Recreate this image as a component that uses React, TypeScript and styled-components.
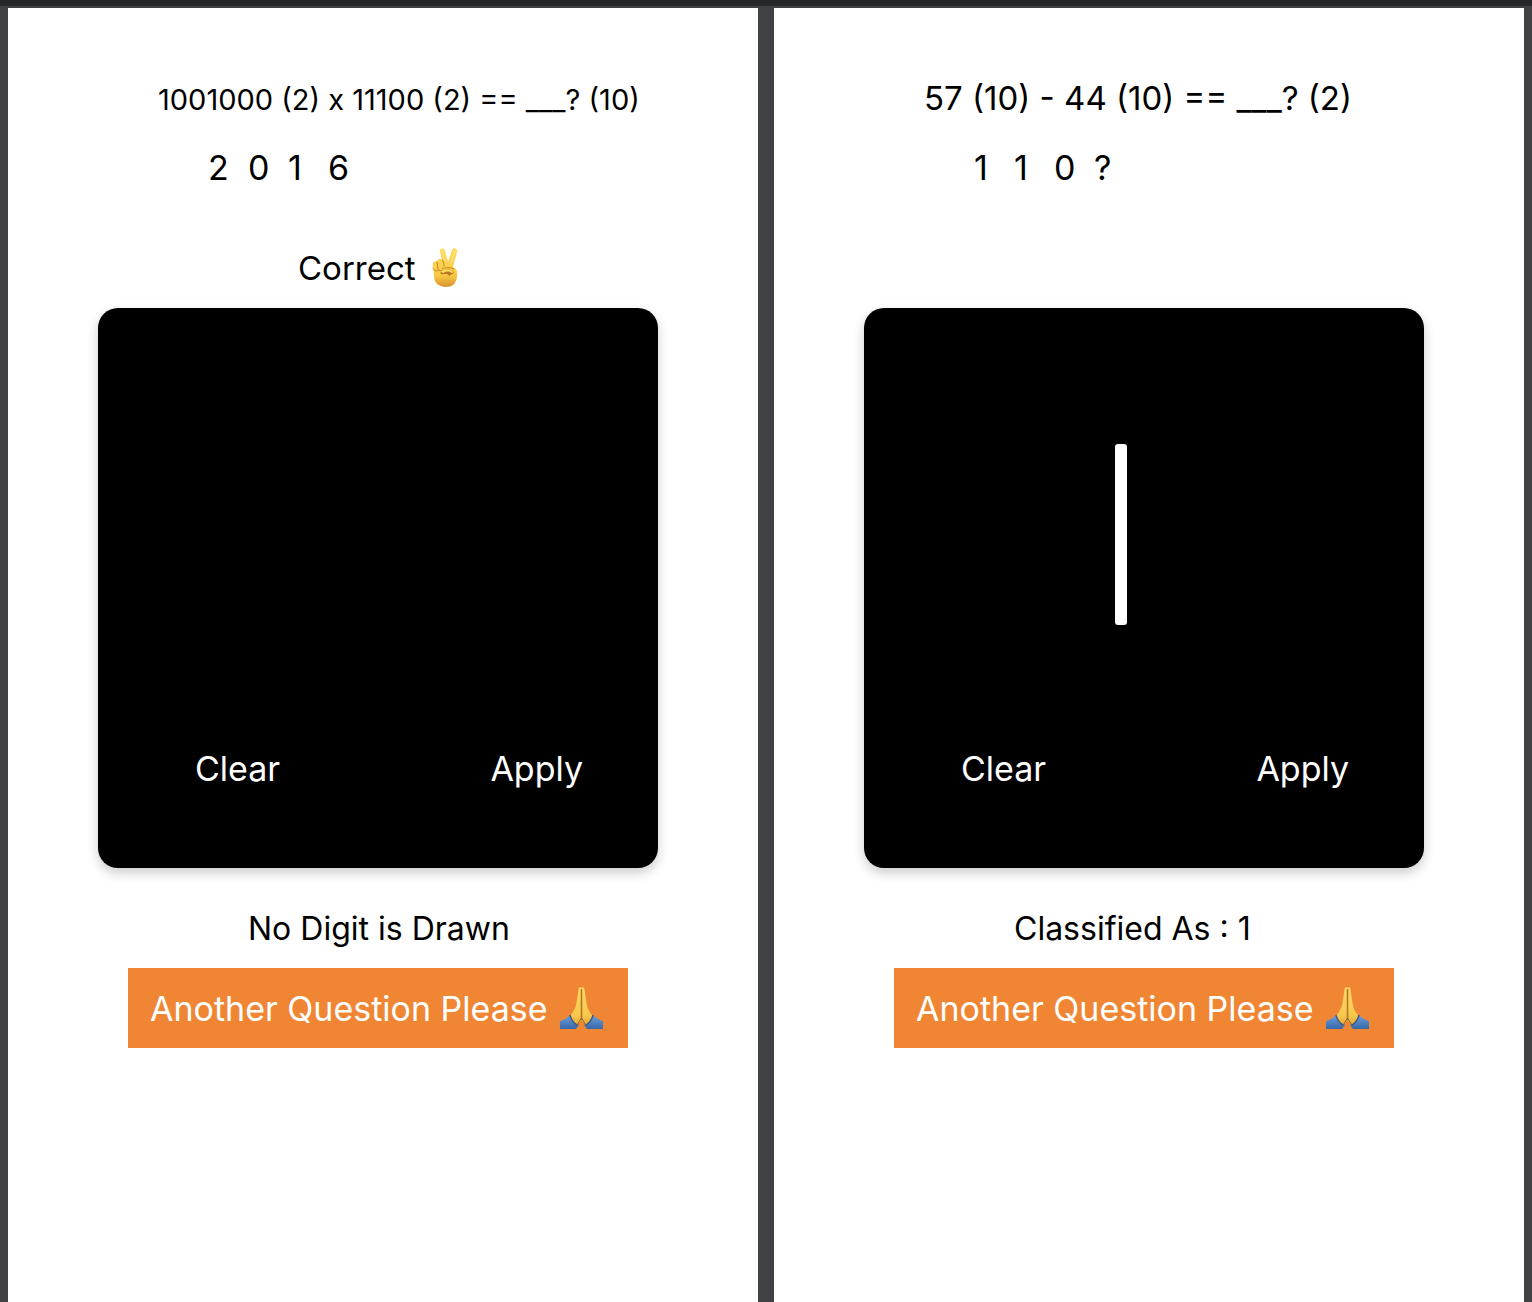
import React from "react";
import styled, { createGlobalStyle } from "styled-components";

const GlobalStyle = createGlobalStyle`
  *, *::before, *::after { box-sizing: border-box; }
  body {
    margin: 0;
    background: #404145;
    color: #000;
    font-family: Inter, "Liberation Sans", sans-serif;
    font-size: 34px;
  }
`;

const Page = styled.main`
  display: grid;
  grid-template-columns: repeat(2, minmax(0, 1fr));
  gap: 16px;
  min-height: 100vh;
  padding: 2px 8px 0;
  border-top: 6px solid #252629;
`;

const Screen = styled.section`
  display: flex;
  flex-direction: column;
  padding: 60px 100px 60px 90px;
  background: #fff;
`;

const Question = styled.h1`
  margin: 0 -60px 0 60px;
  font-size: 33px;
  font-weight: 400;
  line-height: 60px;
  white-space: nowrap;
`;

const Expression = styled.span<{ $small?: boolean }>`
  font-size: ${(p) => (p.$small ? 29 : 33)}px;
  line-height: 1;
`;

const Answer = styled.div`
  display: grid;
  grid-template-columns: repeat(auto-fill, 40px);
  align-items: center;
  height: 80px;
  padding-left: 110px;
  line-height: 40px;
`;

const Message = styled.p<{ $indent: number }>`
  display: flex;
  align-items: center;
  gap: 16px;
  height: 80px;
  margin: 20px 0 0;
  padding-left: ${(p) => p.$indent}px;
  white-space: nowrap;
`;

const Verdict = styled(Message)`
  font-size: 33px;
`;

const Result = styled(Message)`
  font-size: 32px;
`;

const Board = styled.div`
  position: relative;
  display: flex;
  align-items: flex-end;
  justify-content: space-between;
  width: 100%;
  max-width: 560px;
  aspect-ratio: 1;
  padding: 0 75px 70px 97px;
  border-radius: 20px;
  background: #000;
  box-shadow: 0 5px 12px rgba(0, 0, 0, 0.2);
`;

const Drawing = styled.svg`
  position: absolute;
  inset: 0;
  width: 100%;
  height: 100%;
`;

const BoardButton = styled.button`
  position: relative;
  height: 60px;
  padding: 0;
  border: 0;
  background: transparent;
  color: #fff;
  font: inherit;
  cursor: pointer;
`;

const NextButton = styled.button`
  display: flex;
  align-items: center;
  gap: 12px;
  height: 80px;
  max-width: 500px;
  margin: 0 30px;
  padding: 0 22px;
  border: 0;
  background: #f08633;
  color: #fff;
  font: inherit;
  white-space: nowrap;
  cursor: pointer;
`;

const Icon = styled.svg`
  flex: none;
`;

function VictoryHand() {
  return (
    <Icon width="28" height="40" viewBox="0 0 28 40" role="img" aria-label="Victory hand">
      <defs>
        <linearGradient id="victory" x1="0" y1="0" x2="0" y2="1">
          <stop offset="0" stopColor="#ffdb5c" />
          <stop offset="0.7" stopColor="#f9c945" />
          <stop offset="1" stopColor="#d8932d" />
        </linearGradient>
      </defs>
      <path
        d="M8 4C7 0 12-1 13 3l3 11 4-12c1-3 6-2 5 2l-4 15c4 2 5 5 4 10-1 7-5 10-11 10-7 0-12-4-12-11l-1-10c-1-3 1-5 4-5 1-3 4-2 5-1Z"
        fill="url(#victory)"
      />
      <path
        d="M10 12c2 1 2 4 2 6M5 14l1 7c1 3 5 2 5-1M1 20c1 3 4 4 6 2m5-2c3 0 7-1 10 1"
        fill="none"
        stroke="#c58422"
        strokeWidth="1"
        strokeLinecap="round"
      />
      <path d="M8 25c2 3 7-1 9 3 2-2 4-1 5-4-3-3-8-3-10-1Z" fill="#bc7a20" />
      <path d="M11 24c3-2 7-2 9 0" fill="none" stroke="#ffdc62" strokeWidth="2" strokeLinecap="round" />
      <path d="M10 3l3 10M23 3l-4 12" fill="none" stroke="#ffe58a" strokeWidth="1" strokeLinecap="round" />
    </Icon>
  );
}

function FoldedHands() {
  return (
    <Icon width="43" height="42" viewBox="0 0 43 42" role="img" aria-label="Folded hands">
      <defs>
        <linearGradient id="skin" x1="0" y1="0" x2="0" y2="1">
          <stop offset="0" stopColor="#ffdb68" />
          <stop offset="0.75" stopColor="#f7c74c" />
          <stop offset="1" stopColor="#e2a83d" />
        </linearGradient>
        <linearGradient id="sleeve" x1="0" y1="0" x2="0" y2="1">
          <stop offset="0" stopColor="#6ea0df" />
          <stop offset="1" stopColor="#3767a8" />
        </linearGradient>
      </defs>
      <path d="M0 34c4-1 7-3 10-6l9 10-3 4H0ZM43 34c-4-1-7-3-10-6l-9 10 3 4h16Z" fill="url(#sleeve)" />
      <path
        d="M21.5 1c-2-2-3 0-3 2l-2 13c-1 6-4 9-6 13 1 4 4 7 7 9l4-5 4 5c3-2 6-5 7-9-3-4-5-7-6-13l-2-13c0-2-1-4-3-2Z"
        fill="url(#skin)"
      />
      <path d="M21.5 2v31" fill="none" stroke="#b57725" strokeWidth="1.6" />
      <path d="m21.5 31-5 8m5-8 5 8" fill="none" stroke="#8b652f" strokeWidth="1" />
      <path d="M10 28c1 5 4 8 7 10m16-10c-1 5-4 8-7 10" fill="none" stroke="#3f5877" strokeWidth="1.4" />
    </Icon>
  );
}

interface QuizProps {
  question: string;
  small?: boolean;
  digits: string[];
  correct?: boolean;
  result: string;
  stroke?: boolean;
}

function Quiz({ question, small, digits, correct, result, stroke }: QuizProps) {
  return (
    <Screen>
      <Question>
        <Expression $small={small}>{question}</Expression>
      </Question>
      <Answer>
        {digits.map((digit, index) => (
          <span key={index}>{digit}</span>
        ))}
      </Answer>
      <Verdict $indent={200}>
        {correct && (
          <>
            Correct <VictoryHand />
          </>
        )}
      </Verdict>
      <Board>
        <Drawing viewBox="0 0 560 560" aria-hidden="true">
          {stroke && <rect x="251" y="136" width="12" height="181" rx="3" fill="#fff" />}
        </Drawing>
        <BoardButton type="button">Clear</BoardButton>
        <BoardButton type="button">Apply</BoardButton>
      </Board>
      <Result $indent={150}>{result}</Result>
      <NextButton type="button">
        Another Question Please <FoldedHands />
      </NextButton>
    </Screen>
  );
}

export default function App() {
  return (
    <>
      <GlobalStyle />
      <Page>
        <Quiz
          question="1001000 (2) x 11100 (2) == ___? (10)"
          small
          digits={["2", "0", "1", "6"]}
          correct
          result="No Digit is Drawn"
        />
        <Quiz
          question="57 (10) - 44 (10) == ___? (2)"
          digits={["1", "1", "0", "?"]}
          result="Classified As : 1"
          stroke
        />
      </Page>
    </>
  );
}
